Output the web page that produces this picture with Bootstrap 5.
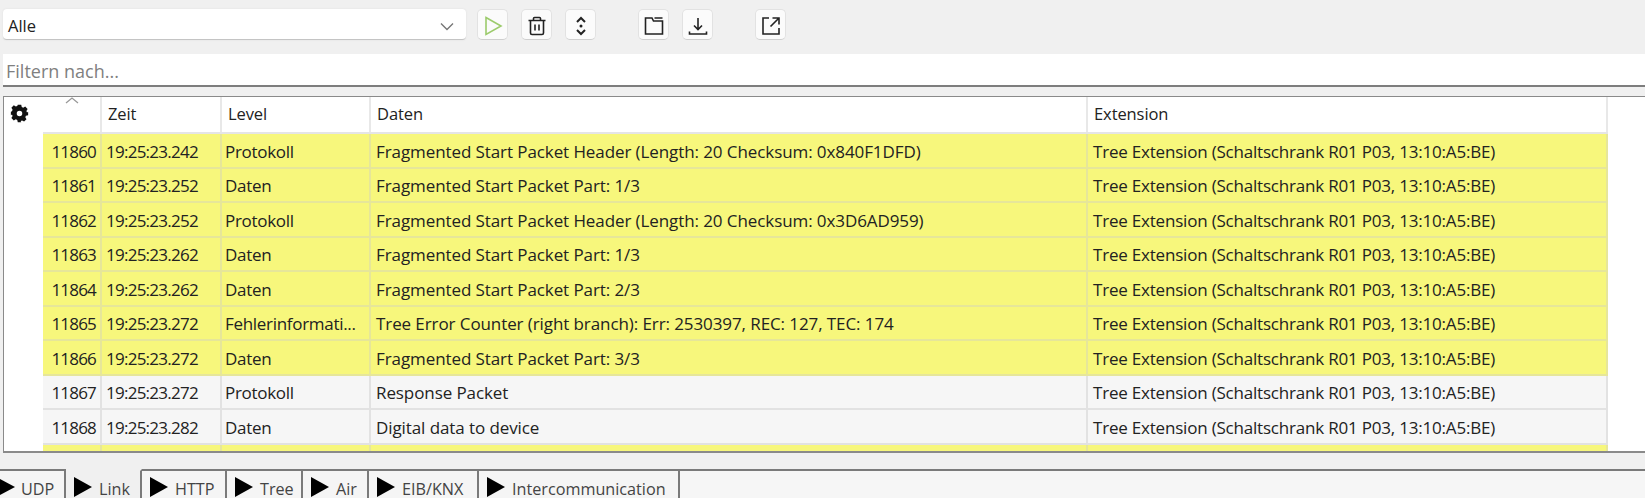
<!DOCTYPE html>
<html lang="de">
<head>
<meta charset="utf-8">
<title>Log</title>
<link rel="stylesheet" href="https://cdn.jsdelivr.net/npm/bootstrap@5.3.0/dist/css/bootstrap.min.css">
<style>
html,body{height:498px;overflow:hidden}
body{background:#f0f0f0;font-family:"Open Sans","Noto Sans",sans-serif;font-size:17px;color:#222}
.tool-row{height:54px;padding:9px 0 0 3px}
.sel-box{width:463px;height:31px;background:#fff;border:0;border-bottom:1px solid #c4c4c4;border-radius:4px;box-shadow:0 0 2px #ddd;padding:5px 12px 0 5px;font-size:16.5px}
.tbtn{width:31px;height:31px;padding:0;background:#fbfbfb;border:1px solid #e2e2e2;border-bottom-color:#cfcfcf;border-radius:5px;margin-left:13px}
.tbtn.first{margin-left:11px}
.tbtn.gap-l{margin-left:42px}
.tbtn svg{width:22px;height:22px;fill:none;stroke:#222;stroke-width:1.6}
.filter-band{height:33px;background:#fff;border-bottom:2px solid #7d7d7d;margin-left:3px;padding:3px 3px 0;color:#808080;font-size:18px}
.main-area{height:357px;margin-top:9px;margin-left:3px;background:#fff;border:1px solid #8a8a8a;border-right:0;border-bottom:2px solid #8a8a8a;overflow:hidden}
.gear-col{width:39px;flex:none;padding-top:2px;padding-left:6px}
.log-table{table-layout:fixed;width:1564px;margin:0;border-collapse:collapse}
.log-table th,.log-table td{height:34.5px;padding:2px 0 0 5px;border:0;border-right:2px solid #e6e69a;border-bottom:2px solid #e6e69a;white-space:nowrap;overflow:hidden;font-weight:400;vertical-align:middle;color:#222;background:transparent;letter-spacing:-.09px}
.log-table thead th{height:36px;background:#fff;border-right-color:#e8e8e8;border-bottom:2px solid #e5e5e5;padding:0 0 0 6px;position:relative;font-size:16.5px}
.sort-mark{position:absolute;left:22px;top:0;width:14px;height:7px}
.log-table td.num{text-align:right;padding:2px 4px 0 0;letter-spacing:-.8px}
.log-table td.clock{letter-spacing:-.75px;padding-left:4px}
.log-table td.lvl{letter-spacing:-.3px;padding-left:3px}
.log-table td.ext{letter-spacing:-.2px}
.row-y td{background:#f7f77c}
.log-table .row-g td{background:#f6f6f6;border-color:#e2e2e2}
.tab-strip{margin-top:16px;height:29px;border-top:2px solid #7a7a7a;background:#f6f6f6}
.tab-item{height:34px;margin-top:-2px;border:2px solid #7a7a7a;border-left:0;background:#f5f5f5;padding:6px 0 0 8px;color:#444;font-size:16.2px;gap:7px;white-space:nowrap}
.tab-item.on{background:#f0f0f0;border-top-color:#f0f0f0}
.tab-item svg{width:18px;height:20px;fill:#000;flex:none;margin-top:-4px}
.tab-item.cut{padding-left:0;gap:6px;width:66px}
.tab-item.cut svg{width:15px}
.tab-item:nth-child(2){width:76px}
.tab-item:nth-child(3){width:85px}
.tab-item:nth-child(4){width:76px}
.tab-item:nth-child(5){width:66px}
.tab-item:nth-child(6){width:110px}
.tab-item:nth-child(7){width:201px}
</style>
</head>
<body>
<div class="d-flex align-items-start tool-row">
  <div class="sel-box d-flex align-items-center justify-content-between">
    <span>Alle</span>
    <svg width="14" height="9" viewBox="0 0 14 9" fill="none" stroke="#777" stroke-width="1.4"><path d="M1 1.500l6 6 6-6"/></svg>
  </div>
  <button class="btn tbtn first" aria-label="Start"><svg viewBox="0 0 22 22" style="stroke:#9ccb6c"><path d="M4 2.500L19 11 4 19.500z"/></svg></button>
  <button class="btn tbtn" aria-label="Löschen"><svg viewBox="0 0 22 22"><path d="M2.500 5.500h17M7.500 5V3.500q0-1 1-1h5q1 0 1 1V5M4.500 5.500V18q0 1.500 1.500 1.500h10q1.500 0 1.500-1.500V5.500M9 9.500v6M13 9.500v6"/></svg></button>
  <button class="btn tbtn" aria-label="Scrollen"><svg viewBox="0 0 22 22"><path stroke-width="2" d="M7 7l4-4 4 4M7 15l4 4 4-4"/><circle cx="11" cy="11" r="1.500" fill="#222" stroke="none"/></svg></button>
  <button class="btn tbtn gap-l" aria-label="Öffnen"><svg viewBox="0 0 22 22"><path d="M2.500 3v16h17V6h-9L9 3zM11.500 3h8"/></svg></button>
  <button class="btn tbtn" aria-label="Speichern"><svg viewBox="0 0 22 22"><path d="M11 3v11M7 10.500l4 4 4-4M2.500 16.500v2.500h17v-2.500"/></svg></button>
  <button class="btn tbtn gap-l" aria-label="Extern"><svg viewBox="0 0 22 22"><path d="M9 3H3v16h16v-6M12.500 3H19v6.500M19 3l-8.500 8.500"/></svg></button>
</div>
<div class="filter-band d-flex align-items-center">Filtern nach...</div>
<div class="main-area d-flex">
  <div class="gear-col">
    <svg width="19" height="19" viewBox="-1 -1 22 22"><path fill="#111" fill-rule="evenodd" d="M8 0h4l.6 2.600 1.700.7 2.300-1.400 2.800 2.800-1.400 2.300.7 1.700L20 8v4l-2.600.6-.7 1.700 1.400 2.300-2.800 2.800-2.300-1.400-1.700.7L12 20H8l-.6-2.600-1.700-.7-2.300 1.400L.6 15.300 2 13l-.7-1.700L0 12V8l1.300-.7.7-1.700L.6 3.300 3.400.5 5.700 2l1.700-.7zM10 6.800a3.200 3.200 0 1 0 0 6.400 3.200 3.200 0 0 0 0-6.400z"/></svg>
  </div>
  <table class="table log-table">
    <colgroup><col style="width:58px"><col style="width:120px"><col style="width:149px"><col style="width:717px"><col style="width:520px"></colgroup>
    <thead><tr><th><svg class="sort-mark" viewBox="0 0 14 7" fill="none" stroke="#999" stroke-width="1.300"><path d="M1 6l6-5 6 5"/></svg></th><th>Zeit</th><th>Level</th><th>Daten</th><th>Extension</th></tr></thead>
    <tbody>
      <tr class="row-y"><td class="num">11860</td><td class="clock">19:25:23.242</td><td class="lvl">Protokoll</td><td>Fragmented Start Packet Header (Length: 20 Checksum: 0x840F1DFD)</td><td class="ext">Tree Extension (Schaltschrank R01 P03, 13:10:A5:BE)</td></tr>
      <tr class="row-y"><td class="num">11861</td><td class="clock">19:25:23.252</td><td class="lvl">Daten</td><td>Fragmented Start Packet Part: 1/3</td><td class="ext">Tree Extension (Schaltschrank R01 P03, 13:10:A5:BE)</td></tr>
      <tr class="row-y"><td class="num">11862</td><td class="clock">19:25:23.252</td><td class="lvl">Protokoll</td><td>Fragmented Start Packet Header (Length: 20 Checksum: 0x3D6AD959)</td><td class="ext">Tree Extension (Schaltschrank R01 P03, 13:10:A5:BE)</td></tr>
      <tr class="row-y"><td class="num">11863</td><td class="clock">19:25:23.262</td><td class="lvl">Daten</td><td>Fragmented Start Packet Part: 1/3</td><td class="ext">Tree Extension (Schaltschrank R01 P03, 13:10:A5:BE)</td></tr>
      <tr class="row-y"><td class="num">11864</td><td class="clock">19:25:23.262</td><td class="lvl">Daten</td><td>Fragmented Start Packet Part: 2/3</td><td class="ext">Tree Extension (Schaltschrank R01 P03, 13:10:A5:BE)</td></tr>
      <tr class="row-y"><td class="num">11865</td><td class="clock">19:25:23.272</td><td class="lvl">Fehlerinformati...</td><td>Tree Error Counter (right branch): Err: 2530397, REC: 127, TEC: 174</td><td class="ext">Tree Extension (Schaltschrank R01 P03, 13:10:A5:BE)</td></tr>
      <tr class="row-y"><td class="num">11866</td><td class="clock">19:25:23.272</td><td class="lvl">Daten</td><td>Fragmented Start Packet Part: 3/3</td><td class="ext">Tree Extension (Schaltschrank R01 P03, 13:10:A5:BE)</td></tr>
      <tr class="row-g"><td class="num">11867</td><td class="clock">19:25:23.272</td><td class="lvl">Protokoll</td><td>Response Packet</td><td class="ext">Tree Extension (Schaltschrank R01 P03, 13:10:A5:BE)</td></tr>
      <tr class="row-g"><td class="num">11868</td><td class="clock">19:25:23.282</td><td class="lvl">Daten</td><td>Digital data to device</td><td class="ext">Tree Extension (Schaltschrank R01 P03, 13:10:A5:BE)</td></tr>
      <tr class="row-y"><td class="num"></td><td></td><td></td><td></td><td></td></tr>
    </tbody>
  </table>
</div>
<div class="tab-strip d-flex">
  <div class="tab-item cut d-flex align-items-center"><svg viewBox="0 0 15 20"><path d="M-4 0l19 10-19 10z"/></svg>UDP</div>
  <div class="tab-item on d-flex align-items-center"><svg viewBox="0 0 18 20"><path d="M0 0l18 10-18 10z"/></svg>Link</div>
  <div class="tab-item d-flex align-items-center"><svg viewBox="0 0 18 20"><path d="M0 0l18 10-18 10z"/></svg>HTTP</div>
  <div class="tab-item d-flex align-items-center"><svg viewBox="0 0 18 20"><path d="M0 0l18 10-18 10z"/></svg>Tree</div>
  <div class="tab-item d-flex align-items-center"><svg viewBox="0 0 18 20"><path d="M0 0l18 10-18 10z"/></svg>Air</div>
  <div class="tab-item d-flex align-items-center"><svg viewBox="0 0 18 20"><path d="M0 0l18 10-18 10z"/></svg>EIB/KNX</div>
  <div class="tab-item d-flex align-items-center"><svg viewBox="0 0 18 20"><path d="M0 0l18 10-18 10z"/></svg>Intercommunication</div>
</div>
<script src="https://cdn.jsdelivr.net/npm/bootstrap@5.3.0/dist/js/bootstrap.bundle.min.js"></script>
</body>
</html>
